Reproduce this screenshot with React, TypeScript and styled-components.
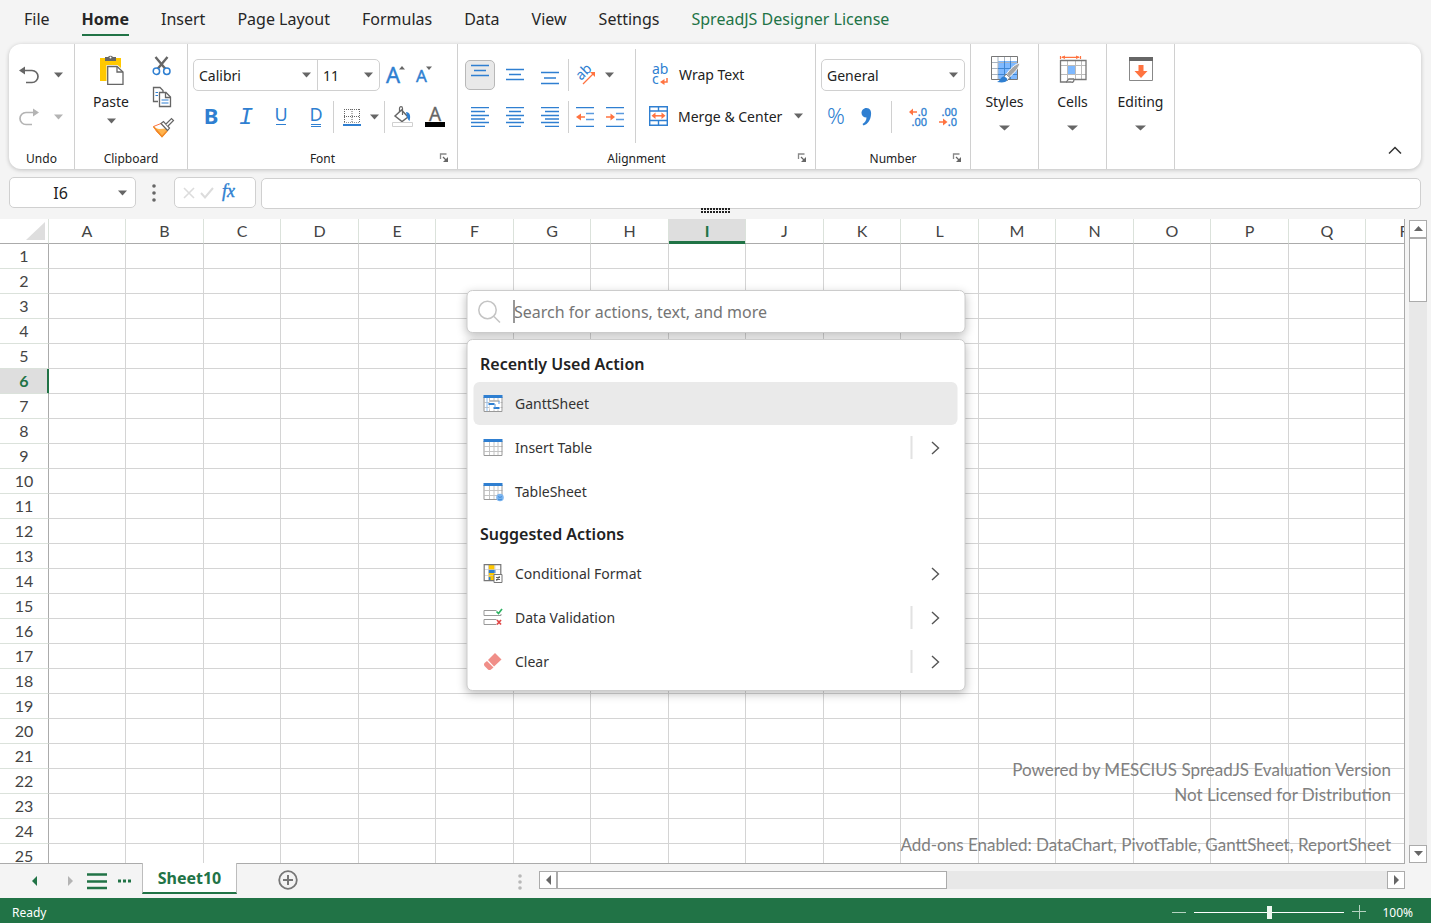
import React from "react";
import styled, { createGlobalStyle, css } from "styled-components";

const green = "#217346";
const blue = "#2f7fd1";
const orange = "#ff7340";
const gray = "#666666";
const line = "#d0d0d0";
const uiFont = '"Noto Sans", "Open Sans", sans-serif';
const sheetFont = 'Lato, "Noto Sans", sans-serif';

const GlobalStyle = createGlobalStyle`
  * { box-sizing: border-box; }
  body { margin: 0; background: #f4f4f4; color: #222; font-family: ${uiFont}; }
  button, input, select { font: inherit; color: inherit; }
  button { background: none; border: 0; padding: 0; margin: 0; cursor: pointer; }
  svg { display: block; flex: none; overflow: visible; }
`;

const Page = styled.div`
  position: relative;
  display: flex;
  flex-direction: column;
  height: 100vh;
  overflow: hidden;
`;

/* ---------- ribbon tabs ---------- */

const Tabs = styled.nav`
  display: flex;
  flex: none;
  gap: 32px;
  height: 44px;
  padding: 0 24px;
`;

const Tab = styled.a<{ $active?: boolean; $accent?: boolean }>`
  height: 36px;
  border-bottom: 2px solid ${(p) => (p.$active ? green : "transparent")};
  color: ${(p) => (p.$accent ? green : "#262626")};
  font-size: 16px;
  font-weight: ${(p) => (p.$active ? 700 : 400)};
  line-height: 38px;
  text-decoration: none;
  white-space: nowrap;
`;

/* ---------- ribbon ---------- */

const Ribbon = styled.div`
  display: flex;
  flex: none;
  height: 125px;
  margin: 0 10px 0 9px;
  background: #fff;
  border-radius: 12px;
  box-shadow: 0 1px 4px rgba(0, 0, 0, 0.22);
`;

const Group = styled.section<{ $width: number }>`
  display: flex;
  flex: none;
  flex-direction: column;
  width: ${(p) => p.$width}px;
  border-right: 1px solid ${line};
`;

const GroupFooter = styled.footer`
  display: grid;
  grid-template-columns: 1fr auto 1fr;
  align-items: center;
  height: 22px;
  margin-top: auto;
  font-size: 12px;

  button { justify-self: end; margin-right: 6px; }
`;

const FooterLabel = styled.span`
  grid-column: 2;
`;

const Rows = styled.div<{ $left: number }>`
  display: flex;
  flex-direction: column;
  gap: 10px;
  padding: 15px 0 0 ${(p) => p.$left}px;
`;

const Row = styled.div<{ $gap?: number }>`
  display: flex;
  align-items: center;
  gap: ${(p) => p.$gap ?? 0}px;
  height: 32px;
`;

const Split = styled.div`
  display: flex;
`;

const IconButton = styled.button<{ $width?: number; $height?: number; $active?: boolean }>`
  display: flex;
  align-items: center;
  justify-content: center;
  width: ${(p) => p.$width ?? 30}px;
  height: ${(p) => p.$height ?? 30}px;
  border-radius: 5px;
  ${(p) =>
    p.$active &&
    css`
      background: #e9e9e9;
      border: 1px solid #b8b8b8;
    `}
`;

const Rule = styled.span<{ $height?: number; $before?: number; $after?: number }>`
  flex: none;
  width: 1px;
  height: ${(p) => p.$height ?? 32}px;
  margin: 0 ${(p) => p.$after ?? 0}px 0 ${(p) => p.$before ?? 0}px;
  background: ${line};
`;

const TallRule = styled(Rule)`
  margin-top: 5px;
`;

const TallButton = styled.button<{ $gap: number }>`
  display: flex;
  flex-direction: column;
  align-items: center;
  width: 54px;
  margin: 11px auto 0;
  font-size: 14px;
  line-height: 20px;

  svg + span { margin-top: 7px; }
  span + svg { margin-top: ${(p) => p.$gap}px; }
`;

const ClipboardBody = styled.div`
  display: flex;
  gap: 13px;
  padding-left: 9px;

  ${TallButton} { margin: 11px 0 0; }
`;

const IconStack = styled.div`
  display: flex;
  flex-direction: column;
  gap: 11px;
  padding-top: 12px;
`;

const Combo = styled.div`
  display: flex;
  align-self: flex-start;
  height: 32px;
  margin-right: 1px;
  border: 1px solid ${line};
  border-radius: 5px;
`;

const Picker = styled.label<{ $width: number; $divided?: boolean }>`
  display: grid;
  align-items: center;
  width: ${(p) => p.$width}px;
  border-left: ${(p) => (p.$divided ? `1px solid ${line}` : "0")};
  font-size: 14px;

  select, svg { grid-area: 1 / 1; }
  select {
    width: 100%;
    height: 30px;
    padding: 0 20px 0 5px;
    border: 0;
    background: none;
    appearance: none;
    outline: none;
  }
  svg { justify-self: end; margin-right: 6px; pointer-events: none; }
`;

const LabeledButton = styled.button`
  display: flex;
  align-items: center;
  gap: 10px;
  height: 32px;
  padding-bottom: 2px;
  font-size: 14px;
  white-space: nowrap;

  span + svg { margin-left: 2px; }
`;

const Collapse = styled(IconButton)`
  align-self: flex-end;
  margin: 0 15px 8px auto;
`;

/* ---------- formula bar ---------- */

const FormulaBar = styled.div`
  display: flex;
  flex: none;
  height: 31px;
  margin: 8px 10px 0 9px;
`;

const Box = styled.div`
  display: flex;
  align-items: center;
  height: 31px;
  border: 1px solid ${line};
  border-radius: 5px;
  background: #fff;
`;

const NameBox = styled(Box)`
  width: 127px;
  font-size: 16px;

  input {
    width: 101px;
    height: 28px;
    border: 0;
    padding: 0;
    background: none;
    outline: none;
    text-align: center;
  }
`;

const Grip = styled.div`
  display: flex;
  align-items: center;
  justify-content: center;
  width: 38px;
  padding-right: 2px;
`;

const FxBox = styled(Box)`
  width: 82px;
  padding-left: 6px;
  margin-right: 5px;
`;

const FormulaInput = styled.input`
  flex: 1;
  min-width: 0;
  height: 31px;
  margin-top: 1px;
  padding: 0 8px;
  border: 1px solid ${line};
  border-radius: 5px;
  background: #fff;
  outline: none;
`;

const Resizer = styled.div`
  display: flex;
  flex: none;
  justify-content: center;
  height: 11px;
`;

/* ---------- sheet ---------- */

const Workspace = styled.main`
  display: flex;
  flex: 1 1 0;
  min-height: 0;
`;

const SheetView = styled.div`
  position: relative;
  flex: 1;
  min-width: 0;
  overflow: hidden;
  background: #fff;
  border-right: 1px solid #ababab;
  border-bottom: 1px solid #ababab;
`;

const Grid = styled.table`
  table-layout: fixed;
  width: 1px;
  border-collapse: separate;
  border-spacing: 0;
  color: #444;
  font-family: ${sheetFont};
  font-size: 16px;
  line-height: 24px;

  th, td {
    height: 25px;
    padding: 0;
    border-right: 1px solid #d4d4d4;
    border-bottom: 1px solid #d4d4d4;
    font-weight: 400;
  }
`;

const ColumnHead = styled.th<{ $selected: boolean }>`
  && {
    border-right-color: #dbe2db;
    border-bottom: 1px solid #ababab;
    ${(p) =>
      p.$selected &&
      css`
        background: #dedede;
        color: ${green};
        font-weight: 700;
        box-shadow: inset 0 -2px ${green};
        border-bottom-color: ${green};
      `}
  }
`;

const RowHead = styled.th<{ $selected: boolean }>`
  && {
    border-right: 1px solid #ababab;
    border-bottom-color: #dbe2db;
    ${(p) =>
      p.$selected &&
      css`
        background: #dedede;
        color: ${green};
        font-weight: 700;
        box-shadow: inset -1px 0 ${green};
        border-right-color: ${green};
      `}
  }
`;

const Corner = styled.td`
  && {
    border-right-color: #dbe2db;
    border-bottom-color: #ababab;
  }
  svg { margin-left: auto; margin-right: 3px; }
`;

const Watermark = styled.p`
  position: absolute;
  right: 13px;
  bottom: 6px;
  margin: 0;
  color: #808080;
  font-family: ${sheetFont};
  font-size: 17px;
  line-height: 25px;
  text-align: right;
  white-space: pre-line;
  pointer-events: none;
`;

const ScrollColumn = styled.div`
  display: flex;
  flex: none;
  flex-direction: column;
  width: 18px;
  margin: 1px 4px 1px;
  background: #e8e8e8;
`;

const ScrollButton = styled.button`
  display: flex;
  flex: none;
  align-items: center;
  justify-content: center;
  width: 18px;
  height: 18px;
  background: #fff;
  border: 1px solid #ababab;
`;

const VerticalThumb = styled.div`
  height: 64px;
  margin-bottom: auto;
  background: #fff;
  border: 1px solid #ababab;
`;

/* ---------- sheet tabs ---------- */

const SheetBar = styled.div`
  display: flex;
  flex: none;
  height: 34px;
`;

const SheetNav = styled.div`
  display: flex;
  align-items: center;
  width: 142px;
  padding-left: 24px;
`;

const NavButton = styled(IconButton)<{ $before?: number }>`
  margin-left: ${(p) => p.$before ?? 0}px;
`;

const SheetTab = styled.button`
  position: relative;
  width: 95px;
  height: 31px;
  margin-top: -1px;
  background: #fff;
  border: 1px solid #bdbdbd;
  border-top: 0;
  border-bottom: 2px solid ${green};
  color: ${green};
  font-size: 16px;
  font-weight: 700;
  line-height: 28px;
`;

const AddSheet = styled(IconButton)`
  margin: 1px 0 0 36px;
`;

const ScrollRow = styled.div`
  display: flex;
  width: calc(61% - 7px);
  height: 18px;
  margin: 7px 26px 0 0;
  background: #e8e8e8;
`;

const SplitterGrip = styled(Grip)`
  width: 36px;
  height: 35px;
  margin-left: auto;
`;

const HorizontalThumb = styled.div`
  width: 45%;
  margin-right: auto;
  background: #fff;
  border: 1px solid #ababab;
`;

/* ---------- status bar ---------- */

const StatusBar = styled.footer`
  display: flex;
  flex: none;
  align-items: center;
  height: 25px;
  padding: 3px 18px 0 12px;
  background: ${green};
  color: #fff;
  font-size: 12px;
`;

const ZoomControls = styled.div`
  display: flex;
  align-items: center;
  gap: 8px;
  margin-left: auto;
`;

const ZoomSlider = styled.input`
  width: 150px;
  height: 14px;
  margin: 0;
  appearance: none;
  background: linear-gradient(#fff, #fff) center / 100% 1px no-repeat;

  &::-webkit-slider-thumb {
    appearance: none;
    width: 5px;
    height: 13px;
    background: #eef8f0;
  }
`;

const ZoomValue = styled.span`
  width: 39px;
  text-align: right;
`;

/* ---------- command search ---------- */

const Palette = styled.div`
  position: absolute;
  top: 290px;
  left: 50%;
  width: 499px;
  transform: translateX(-50%);
`;

const surface = css`
  background: #fff;
  border: 1px solid #ccc;
  border-radius: 6px;
  box-shadow: 0 3px 10px rgba(0, 0, 0, 0.25);
`;

const SearchBox = styled.label`
  ${surface}
  display: flex;
  align-items: center;
  height: 43px;
  margin-bottom: 6px;
  padding: 0 12px 0 10px;

  input {
    flex: 1;
    min-width: 0;
    height: 40px;
    padding: 0;
    border: 0;
    background: none;
    font-size: 16px;
    outline: none;
    caret-color: transparent;
  }
  input::placeholder { color: #757575; opacity: 1; }
`;

const Caret = styled.span`
  width: 1px;
  height: 23px;
  margin-left: 12px;
  background: #333;
`;

const Panel = styled.div`
  ${surface}
  padding: 7px 7px 6px 6px;
`;

const Heading = styled.h2`
  margin: 0;
  padding-left: 7px;
  color: #222;
  font-size: 16px;
  font-weight: 600;
  line-height: 35px;
`;

const List = styled.ul`
  margin: 0;
  padding: 0;
  list-style: none;

  & + ${Heading} { margin-top: 4px; }
`;

const Item = styled.li<{ $active?: boolean }>`
  display: flex;
  align-items: center;
  height: 43px;
  margin-bottom: 1px;
  border-radius: 6px;
  background: ${(p) => (p.$active ? "#eaeaea" : "transparent")};
  color: #333;
  font-size: 14px;
`;

const ItemAction = styled.button`
  display: flex;
  flex: 1;
  align-items: center;
  gap: 12px;
  height: 43px;
  padding-left: 10px;
`;

const ItemMore = styled.button<{ $divided?: boolean }>`
  display: flex;
  align-items: center;
  justify-content: center;
  width: 47px;
  height: 23px;
  padding-left: 2px;
  border-left: 2px solid ${(p) => (p.$divided ? "#e2e2e2" : "transparent")};
`;

/* ---------- icons ---------- */

type SvgProps = { w: number; h: number; children: React.ReactNode };
const Svg = ({ w, h, children }: SvgProps) => (
  <svg width={w} height={h} viewBox={`0 0 ${w} ${h}`} fill="none" aria-hidden="true">
    {children}
  </svg>
);

const Down = ({ w = 9, color = gray }: { w?: number; color?: string }) => (
  <Svg w={w} h={6}>
    <path d={`M0 0.500H${w}L${w / 2} 5.500Z`} fill={color} />
  </Svg>
);

const UndoIcon = () => (
  <Svg w={20} h={20}>
    <path d="M0 5.500 6 1.500v8Z" fill={gray} />
    <path d="M5 5.500h8a6 6 0 0 1 0 12H7" stroke={gray} strokeWidth="1.700" />
  </Svg>
);

const RedoIcon = () => (
  <Svg w={20} h={20}>
    <path d="M20 5.500 14 1.500v8Z" fill="#b4b4b4" />
    <path d="M15 5.500H7a6 6 0 0 0 0 12h6" stroke="#b4b4b4" strokeWidth="1.700" />
  </Svg>
);

const PasteIcon = () => (
  <Svg w={26} h={30}>
    <path d="M2 3h21v23H2Z" fill="#ffc800" />
    <path d="M7 2h3a3 3 0 0 1 5 0h3v4H7Z" fill={gray} />
    <circle cx="12.500" cy="2.500" r="1" fill="#fff" />
    <path d="M8.500 10h11L27 16.500V30H8.500Z" fill="#fff" />
    <path d="M9.700 11.500H19l6 5.500v12.300H9.700Z" stroke={gray} strokeWidth="1.300" fill="#fff" />
    <path d="M19 11.500V17h6" stroke={gray} strokeWidth="1.300" />
  </Svg>
);

const CutIcon = () => (
  <Svg w={20} h={20}>
    <path d="M3.500 1 13.500 13M15.500 1 5.500 13" stroke={gray} strokeWidth="2.400" />
    <circle cx="4.400" cy="15.300" r="3.200" stroke={blue} strokeWidth="1.500" />
    <circle cx="14.800" cy="15.300" r="3.200" stroke={blue} strokeWidth="1.500" />
  </Svg>
);

const CopyIcon = () => (
  <Svg w={20} h={20}>
    <path d="M6 14.500H1.500V.5H8l3 3V5" stroke={gray} strokeWidth="1.300" />
    <path d="M3.500 5.500H6M3.500 8.500H6" stroke={blue} strokeWidth="1.200" />
    <path d="M7.500 5.500h6.500l4.500 4.500v9.500h-11Z" stroke={gray} strokeWidth="1.300" fill="#fff" />
    <path d="M13.500 5.500v5h5" stroke={gray} strokeWidth="1.300" />
    <path d="M9.500 13h7M9.500 16h7" stroke={blue} strokeWidth="1.200" />
  </Svg>
);

const BrushIcon = () => (
  <Svg w={20} h={20}>
    <path d="M1.500 8.500 9 5.500l6.500 7L10 19 5 14Z" fill="#fff" stroke={orange} strokeWidth="1" />
    <path d="m3 10 4 1 7-.5 1 2L10 18.500 5 14Z" fill="#ffb34d" />
    <path d="m1.500 8.500 8.500 10 5-5.500" stroke="#f08c28" strokeWidth="1.500" />
    <path d="m9 5.500 2.500-2 6 6.500-2 2.500Z" fill="#fff" stroke={gray} strokeWidth="1.200" />
    <path d="m14 6 5.500-5.500 2 2L16 8" fill="#fff" stroke={gray} strokeWidth="1.200" />
  </Svg>
);

const Glyph = ({
  text,
  size = 22,
  weight = 400,
  italic,
  lines = 0,
}: {
  text: string;
  size?: number;
  weight?: number;
  italic?: boolean;
  lines?: number;
}) => (
  <Svg w={20} h={22}>
    <text
      x="10"
      y={lines ? 15 : 18}
      textAnchor="middle"
      fill={blue}
      fontSize={size}
      fontWeight={weight}
      fontStyle={italic ? "italic" : "normal"}
      fontFamily={italic ? "Liberation Mono, monospace" : "Noto Sans, sans-serif"}
    >
      {text}
    </text>
    {lines > 0 && <path d="M5 18.500h10" stroke={blue} />}
    {lines > 1 && <path d="M5 20.500h10" stroke={blue} />}
  </Svg>
);

const FontSizeIcon = ({ grow }: { grow?: boolean }) => (
  <Svg w={20} h={24}>
    <text x="0" y={grow ? 20 : 19} fill={blue} stroke={blue} strokeWidth="0.400" fontSize={grow ? 22 : 17} fontFamily="Noto Sans, sans-serif">
      A
    </text>
    <path d={grow ? "M13 6.500h6l-3-3.500Z" : "M10 3.500h6l-3 3.500Z"} fill={gray} />
  </Svg>
);

const BorderIcon = () => (
  <Svg w={18} h={18}>
    <path d="M1 1.500h16M1 8.500h16M1.500 1v14M9 1v14M16.500 1v14" stroke={gray} strokeDasharray="1 1" />
    <path d="M1 14.500h16" stroke="#999" strokeDasharray="1 1" />
    <path d="M0 17h18" stroke={blue} strokeWidth="2" />
  </Svg>
);

const FillIcon = () => (
  <Svg w={22} h={22}>
    <path d="m3 10 6.500-6 6.500 7-6 4.500Z" stroke={gray} strokeWidth="1.500" fill="#fff" />
    <path d="M7.500 6V2.500c0-2.500 3-2.500 3 0V9" stroke={gray} strokeWidth="1.200" />
    <path d="M14 6c4 0 5 4 3.500 9-2-1.500-2.500-4-3-7Z" fill={blue} />
    <path d="M.5 16.500h20v4H.5Z" fill="#fff" stroke={line} />
  </Svg>
);

const FontColorIcon = () => (
  <Svg w={22} h={22}>
    <text x="11" y="15" textAnchor="middle" fill={gray} stroke={gray} strokeWidth="0.300" fontSize="19" fontFamily="Noto Sans, sans-serif">
      A
    </text>
    <path d="M1 16h20v5H1Z" fill="#000" />
  </Svg>
);

const LinesIcon = ({ d, h = 20 }: { d: string; h?: number }) => (
  <Svg w={20} h={h}>
    <path d={d} stroke={blue} strokeWidth="1.300" />
  </Svg>
);

const IndentIcon = ({ increase }: { increase?: boolean }) => (
  <Svg w={20} h={20}>
    <path d="M0 .7h18M0 19.300h18" stroke={blue} strokeWidth="1.300" />
    <path d="M10 6.500h8M10 12.500h8" stroke="#5c9bdf" strokeWidth="1.500" />
    <path d={increase ? "M0 10h6" : "M4 10h5"} stroke={orange} strokeWidth="1.500" />
    <path d={increase ? "M4.500 6.500v7L9 10Z" : "M5 6.500v7L0 10Z"} fill={orange} />
  </Svg>
);

const OrientationIcon = () => (
  <Svg w={20} h={20}>
    <text x="0" y="0" transform="translate(5 16) rotate(-45)" fill={blue} fontSize="14" fontFamily="Noto Sans, sans-serif">
      ab
    </text>
    <path d="M7 19 18 8" stroke={orange} strokeWidth="1.300" />
    <path d="M19 7v5l-5-5Z" fill={orange} />
  </Svg>
);

const WrapIcon = () => (
  <Svg w={20} h={22}>
    <text x="3" y="11" fill={blue} fontSize="14" fontFamily="Noto Sans, sans-serif">
      ab
    </text>
    <text x="3" y="21" fill={blue} fontSize="14" fontFamily="Noto Sans, sans-serif">
      c
    </text>
    <path d="M18 15v4h-4" stroke={orange} strokeWidth="1.500" />
    <path d="M15.500 16v6L11 19Z" fill={orange} />
  </Svg>
);

const MergeIcon = () => (
  <Svg w={19} h={20}>
    <path d="M.7.7h17.600v18.600H.7ZM.7 5h17.600M.7 14.500h17.600M9.500 0v5M9.500 14.500v5" stroke={blue} strokeWidth="1.400" />
    <path d="M4 9.800h11" stroke={orange} strokeWidth="1.500" />
    <path d="M6.500 6.500v6.600L2.500 9.800ZM12.500 6.500v6.600l4-3.300Z" fill={orange} />
  </Svg>
);

const CommaIcon = () => (
  <Svg w={12} h={20}>
    <path d="M6.500 1C10 1 11.500 4 11 8c-.5 5-3 9-7.500 10.500L2.500 17C5 15.500 6.500 13.500 6.500 10.500 3.500 10.500 1.500 8.500 1.500 6S3.500 1 6.500 1Z" fill={blue} />
  </Svg>
);

const DecimalIcon = ({ increase }: { increase?: boolean }) => (
  <Svg w={20} h={22}>
    <g fill={blue} stroke={blue} strokeWidth="0.300" fontSize="11" fontFamily="Noto Sans, sans-serif">
      <text x="19" y="10" textAnchor="end">{increase ? ".0" : ".00"}</text>
      <text x="19" y="20" textAnchor="end">{increase ? ".00" : ".0"}</text>
    </g>
    <path d={increase ? "M3 6h6" : "M1 16h6"} stroke={orange} strokeWidth="1.500" />
    <path d={increase ? "M5 2.500v7L1 6Z" : "M5 12.500v7L9.500 16Z"} fill={orange} />
  </Svg>
);

const StylesIcon = () => (
  <Svg w={30} h={30}>
    <path d="M8 6h19v18H8Z" fill="#7fb9ff" />
    <path d="M2 7.500h25M2 13.500h25M2 19.500h25M8 2v22M14.500 2v22M20.500 2v22" stroke="#a9b4c0" />
    <path d="M8 13.500h19M14.500 6v18M20.500 6v18M8 19.500h19" stroke="#3f86d2" />
    <path d="M1.500 1.500h26v23h-26Z" stroke="#777" />
    <path d="M30 8c-5 1-10 6-13.500 11l3 3C24 18 29 13 30 8Z" fill="#a5a5a5" stroke="#fff" />
    <path d="m16 19 4 3.500-2.500 3-4-3Z" fill="#fff" stroke="#777" />
    <path d="M13 21.500c3 .5 5 2 4 4-2 2.500-6 2-10 1.500 3-1 3-4 6-5.500Z" fill={blue} />
  </Svg>
);

const CellsIcon = () => (
  <Svg w={28} h={30}>
    <path d="M1.500 1v3M21.500 1v3M3 2.300h17" stroke={orange} strokeWidth="1.200" />
    <path d="m6 .5-4 1.800L6 4ZM17 .5l4 1.800L17 4Z" fill={orange} />
    <path d="M9 11h7v8H9Z" fill="#7fb9ff" />
    <path d="M2 10.500h25M2 19.500h25M8.500 6v18M16.500 6v18M22.500 6v18" stroke="#bbb" />
    <path d="M1.500 27V5.500h25.500v19H15c0 3-2 3-3 2.500H1.500Z" stroke="#777" strokeWidth="1.300" />
    <path d="M7 27c2 0 1-3 3-3h5" stroke="#777" strokeWidth="1.300" fill="#fff" />
  </Svg>
);

const EditingIcon = () => (
  <Svg w={26} h={30}>
    <path d="M1.500 2.500h23v23h-23Z" fill="#fff" stroke="#888" />
    <path d="M1 2h24v4H1Z" fill={gray} />
    <path d="M10.500 10h5v6h4L13 23l-6.500-7h4Z" fill={orange} />
  </Svg>
);

const LauncherIcon = () => (
  <Svg w={10} h={10}>
    <path d="M1.500 6V1h6" stroke="#888" strokeWidth="1.300" />
    <path d="m4 4 3 3" stroke={gray} strokeWidth="1.200" />
    <path d="M9 4v5H4Z" fill={gray} />
  </Svg>
);

const ArrowIcon = ({ to, color = gray }: { to: "up" | "down" | "left" | "right"; color?: string }) => {
  const shape = {
    up: "M0 7h9L4.500 2Z",
    down: "M0 2h9L4.500 7Z",
    left: "M7 0v10L2 5Z",
    right: "M2 0v10l5-5Z",
  }[to];
  return (
    <Svg w={9} h={10}>
      <path d={shape} fill={color} />
    </Svg>
  );
};

const DotsIcon = ({ color, step }: { color: string; step: number }) => (
  <Svg w={4} h={20}>
    {[-1, 0, 1].map((n) => (
      <circle key={n} cx="2" cy={10 + n * step} r="1.800" fill={color} />
    ))}
  </Svg>
);

const ChevronRight = () => (
  <Svg w={10} h={14}>
    <path d="m1.500 1 6.500 6-6.500 6" stroke="#555" strokeWidth="1.400" />
  </Svg>
);

const TableBase = () => (
  <>
    <path d="M6 4v14M10.500 4v14M14.500 4v14M1 8.500h18M1 13.500h18" stroke="#c4c4c4" />
    <path d="M.5 3v14.500h18V3" stroke="#999" />
    <path d="M0 1h19v3H0Z" fill={blue} />
  </>
);

const TableIcon = () => (
  <Svg w={20} h={20}>
    <TableBase />
  </Svg>
);

const GanttIcon = () => (
  <Svg w={20} h={20}>
    <path d="M1 4h18v13H1Z" fill="#fff" />
    <TableBase />
    <path d="M3.500 4v13" stroke="#8dbdf0" />
    <path d="M6 6.500h11v9H6Z" fill="#fff" />
    <path d="M6 7h10" stroke="#999" strokeWidth="1.200" />
    <path d="M5 10h6M10 14h6" stroke={blue} strokeWidth="1.800" />
    <path d="M11.500 10v4M15.500 7v3" stroke="#5c9bdf" />
  </Svg>
);

const TableSheetIcon = () => (
  <Svg w={20} h={20}>
    <TableBase />
    <circle cx="16.500" cy="15.500" r="3.800" fill="#7db5ef" />
    <path d="M14.500 14.500c1 1 3 1 4 0M14.500 17c1 1 3 1 4 0" stroke={blue} strokeWidth="0.800" />
  </Svg>
);

const ConditionalIcon = () => (
  <Svg w={20} h={20}>
    <path d="M5 1h6v16H5Z" fill="#ffc800" />
    <path d="M5 6h7v3H5ZM5 13h2v4H5Z" fill={blue} />
    <path d="M1 5.500h16M1 11.500h16M5 1v16M11.500 1v16" stroke="#c8c8c8" strokeWidth="0.700" />
    <path d="M.7.700h16.600v16H.7Z" stroke="#777" strokeWidth="1.200" />
    <path d="M10.500 10.500h8v8h-8Z" fill="#fff" stroke="#777" />
    <path d="M12.500 13.500h4M12.500 15.500h4M16 12l-3 5" stroke="#555" strokeWidth="0.900" />
  </Svg>
);

const ValidationIcon = () => (
  <Svg w={20} h={20}>
    <path d="M13 2.500H.5v5h17V6M13 11.500H.5v5H13" stroke="#999" />
    <path d="m13 3.500 2 2 3.500-4.500" stroke="#2eb262" strokeWidth="1.700" />
    <path d="m13.500 12 4 4.500m0-4.500-4 4.500" stroke="#e04848" strokeWidth="1.700" />
  </Svg>
);

const EraserIcon = () => (
  <Svg w={20} h={20}>
    <path d="m11.500 1 6.500 6.500-7.500 7L4.500 8Z" fill="#f08e88" />
    <path d="m3.500 9 6.500 6.500-2.500 2c-1 .7-2 .7-3 0L1 14c-.7-1-.7-2 0-3Z" fill="#f08e88" />
  </Svg>
);

/* ---------- data ---------- */

const tabs = ["File", "Home", "Insert", "Page Layout", "Formulas", "Data", "View", "Settings"];
const columns = Array.from({ length: 34 }, (_, i) =>
  i < 26 ? String.fromCharCode(65 + i) : "A" + String.fromCharCode(39 + i)
);
const rows = Array.from({ length: 60 }, (_, i) => i + 1);

const alignments = [
  { name: "Align left", d: "M1 .7h18M1 4.500h14M1 8.500h18M1 12h14M1 15.500h18M1 19.300h14" },
  { name: "Center", d: "M1 .7h18M4 4.500h12M1 8.500h18M4 12h12M1 15.500h18M4 19.300h12" },
  { name: "Align right", d: "M1 .7h18M5 4.500h14M1 8.500h18M5 12h14M1 15.500h18M5 19.300h14" },
];

type Entry = { name: string; icon: React.ReactNode; active?: boolean; more?: boolean; divided?: boolean };

const recent: Entry[] = [
  { name: "GanttSheet", icon: <GanttIcon />, active: true },
  { name: "Insert Table", icon: <TableIcon />, more: true, divided: true },
  { name: "TableSheet", icon: <TableSheetIcon /> },
];

const suggested: Entry[] = [
  { name: "Conditional Format", icon: <ConditionalIcon />, more: true },
  { name: "Data Validation", icon: <ValidationIcon />, more: true, divided: true },
  { name: "Clear", icon: <EraserIcon />, more: true, divided: true },
];

const Entries = ({ items }: { items: Entry[] }) => (
  <List>
    {items.map((item) => (
      <Item key={item.name} $active={item.active}>
        <ItemAction>
          {item.icon}
          <span>{item.name}</span>
        </ItemAction>
        {item.more && (
          <ItemMore $divided={item.divided} aria-label={`${item.name} options`}>
            <ChevronRight />
          </ItemMore>
        )}
      </Item>
    ))}
  </List>
);

const Footer = ({ label, launcher }: { label: string; launcher?: boolean }) => (
  <GroupFooter>
    <FooterLabel>{label}</FooterLabel>
    {launcher && (
      <IconButton $width={14} $height={14} aria-label={`${label} settings`}>
        <LauncherIcon />
      </IconButton>
    )}
  </GroupFooter>
);

const CollapsedGroup = ({ label, icon }: { label: string; icon: React.ReactNode }) => (
  <Group $width={68}>
    <TallButton $gap={13}>
      {icon}
      <span>{label}</span>
      <Down w={11} />
    </TallButton>
  </Group>
);

export default function App() {
  return (
    <Page>
      <GlobalStyle />
      <Tabs>
        {tabs.map((tab) => (
          <Tab key={tab} href="#" $active={tab === "Home"}>
            {tab}
          </Tab>
        ))}
        <Tab href="#" $accent>
          SpreadJS Designer License
        </Tab>
      </Tabs>

      <Ribbon>
        <Group $width={66}>
          <Rows $left={10}>
            <Row $gap={14}>
              <IconButton $width={20} aria-label="Undo"><UndoIcon /></IconButton>
              <IconButton $width={10} aria-label="Undo history"><Down /></IconButton>
            </Row>
            <Row $gap={14}>
              <IconButton $width={20} aria-label="Redo"><RedoIcon /></IconButton>
              <IconButton $width={10} aria-label="Redo history"><Down color="#b4b4b4" /></IconButton>
            </Row>
          </Rows>
          <Footer label="Undo" />
        </Group>

        <Group $width={113}>
          <ClipboardBody>
            <TallButton $gap={6}>
              <PasteIcon />
              <span>Paste</span>
              <Down />
            </TallButton>
            <IconStack>
              <IconButton $width={22} $height={20} aria-label="Cut"><CutIcon /></IconButton>
              <IconButton $width={22} $height={20} aria-label="Copy"><CopyIcon /></IconButton>
              <IconButton $width={22} $height={20} aria-label="Format painter"><BrushIcon /></IconButton>
            </IconStack>
          </ClipboardBody>
          <Footer label="Clipboard" />
        </Group>

        <Group $width={270}>
          <Rows $left={5}>
            <Row>
              <Combo>
                <Picker $width={123}>
                  <select aria-label="Font family"><option>Calibri</option></select>
                  <Down />
                </Picker>
                <Picker $width={62} $divided>
                  <select aria-label="Font size"><option>11</option></select>
                  <Down />
                </Picker>
              </Combo>
              <IconButton aria-label="Increase font size"><FontSizeIcon grow /></IconButton>
              <IconButton aria-label="Decrease font size"><FontSizeIcon /></IconButton>
            </Row>
            <Row>
              <IconButton $width={35} aria-label="Bold"><Glyph text="B" weight={700} /></IconButton>
              <IconButton $width={35} aria-label="Italic"><Glyph text="I" size={24} italic /></IconButton>
              <IconButton $width={35} aria-label="Underline"><Glyph text="U" size={18} lines={1} /></IconButton>
              <IconButton $width={35} aria-label="Double underline"><Glyph text="D" size={18} lines={2} /></IconButton>
              <Rule $after={3} />
              <IconButton aria-label="Borders"><BorderIcon /></IconButton>
              <IconButton $width={14} aria-label="Border options"><Down /></IconButton>
              <Rule $before={3} $after={2} />
              <IconButton $width={32} aria-label="Fill color"><FillIcon /></IconButton>
              <IconButton $width={32} aria-label="Font color"><FontColorIcon /></IconButton>
            </Row>
          </Rows>
          <Footer label="Font" launcher />
        </Group>

        <Group $width={358}>
          <Split>
            <Rows $left={7}>
              <Row>
                <Row $gap={5}>
                  <IconButton $active aria-label="Top align"><LinesIcon d="M1 .5h18M4 5.500h12M1 10.500h18" /></IconButton>
                  <IconButton aria-label="Middle align"><LinesIcon d="M1 4.500h18M4 9.500h12M1 14.500h18" /></IconButton>
                  <IconButton aria-label="Bottom align"><LinesIcon d="M1 7.500h18M4 13h12M1 18.500h18" /></IconButton>
                </Row>
                <Rule $before={3} $after={2} />
                <IconButton aria-label="Orientation"><OrientationIcon /></IconButton>
                <IconButton $width={16} aria-label="Orientation options"><Down /></IconButton>
              </Row>
              <Row>
                <Row $gap={5}>
                  {alignments.map((a) => (
                    <IconButton key={a.name} aria-label={a.name}><LinesIcon d={a.d} /></IconButton>
                  ))}
                </Row>
                <Rule $before={3} $after={2} />
                <IconButton aria-label="Decrease indent"><IndentIcon /></IconButton>
                <IconButton aria-label="Increase indent"><IndentIcon increase /></IconButton>
              </Row>
            </Rows>
            <TallRule $height={94} $before={4} />
            <Rows $left={13}>
              <LabeledButton>
                <WrapIcon />
                <span>Wrap Text</span>
              </LabeledButton>
              <LabeledButton>
                <MergeIcon />
                <span>Merge &amp; Center</span>
                <Down />
              </LabeledButton>
            </Rows>
          </Split>
          <Footer label="Alignment" launcher />
        </Group>

        <Group $width={155}>
          <Rows $left={5}>
            <Combo>
              <Picker $width={142}>
                <select aria-label="Number format"><option>General</option></select>
                <Down />
              </Picker>
            </Combo>
            <Row>
              <IconButton aria-label="Percent"><Glyph text="%" weight={300} /></IconButton>
              <IconButton aria-label="Comma style"><CommaIcon /></IconButton>
              <Rule $before={10} $after={11} />
              <IconButton aria-label="Increase decimal"><DecimalIcon increase /></IconButton>
              <IconButton aria-label="Decrease decimal"><DecimalIcon /></IconButton>
            </Row>
          </Rows>
          <Footer label="Number" launcher />
        </Group>

        <CollapsedGroup label="Styles" icon={<StylesIcon />} />
        <CollapsedGroup label="Cells" icon={<CellsIcon />} />
        <CollapsedGroup label="Editing" icon={<EditingIcon />} />

        <Collapse $width={22} $height={22} aria-label="Collapse ribbon">
          <Svg w={14} h={8}>
            <path d="m1 7.500 6-6 6 6" stroke="#333" strokeWidth="1.500" />
          </Svg>
        </Collapse>
      </Ribbon>

      <FormulaBar>
        <NameBox>
          <input aria-label="Name box" defaultValue="I6" />
          <IconButton $width={23} aria-label="Named ranges"><Down /></IconButton>
        </NameBox>
        <Grip><DotsIcon color={gray} step={7} /></Grip>
        <FxBox>
          <IconButton $width={15} aria-label="Cancel">
            <Svg w={12} h={12}><path d="m1 1 10 10M11 1 1 11" stroke="#dcdcdc" strokeWidth="1.600" /></Svg>
          </IconButton>
          <IconButton $width={22} aria-label="Enter">
            <Svg w={14} h={12}><path d="m1 6 4 4.500L13 1" stroke="#dcdcdc" strokeWidth="2" /></Svg>
          </IconButton>
          <IconButton $width={22} aria-label="Insert function">
            <Svg w={18} h={20}>
              <text x="2" y="14" fill={blue} stroke={blue} strokeWidth="0.400" fontSize="18" fontStyle="italic" fontFamily="Liberation Serif, serif">fx</text>
            </Svg>
          </IconButton>
        </FxBox>
        <FormulaInput aria-label="Formula" />
      </FormulaBar>
      <Resizer>
        <Svg w={30} h={5}>
          <path d="M0 1h30M0 4h30" stroke="#222" strokeWidth="2" strokeDasharray="2 1" />
        </Svg>
      </Resizer>

      <Workspace>
        <SheetView>
          <Grid>
            <colgroup>
              <col width={49} />
              {columns.map((c, i) => (
                <col key={c} width={i % 2 ? 78 : 77} />
              ))}
            </colgroup>
            <thead>
              <tr>
                <Corner>
                  <Svg w={19} h={19}><path d="M19 0v18H0Z" fill="#dedede" /></Svg>
                </Corner>
                {columns.map((c) => (
                  <ColumnHead key={c} scope="col" $selected={c === "I"}>{c}</ColumnHead>
                ))}
              </tr>
            </thead>
            <tbody>
              {rows.map((r) => (
                <tr key={r}>
                  <RowHead scope="row" $selected={r === 6}>{r}</RowHead>
                  {columns.map((c) => <td key={c} />)}
                </tr>
              ))}
            </tbody>
          </Grid>
          <Watermark>
            {"Powered by MESCIUS SpreadJS Evaluation Version\nNot Licensed for Distribution\n\nAdd-ons Enabled: DataChart, PivotTable, GanttSheet, ReportSheet"}
          </Watermark>
        </SheetView>
        <ScrollColumn>
          <ScrollButton aria-label="Scroll up"><ArrowIcon to="up" /></ScrollButton>
          <VerticalThumb />
          <ScrollButton aria-label="Scroll down"><ArrowIcon to="down" /></ScrollButton>
        </ScrollColumn>
      </Workspace>

      <SheetBar>
        <SheetNav>
          <NavButton $width={20} aria-label="Previous sheet"><ArrowIcon to="left" color={green} /></NavButton>
          <NavButton $width={20} $before={16} aria-label="Next sheet"><ArrowIcon to="right" color="#b4b4b4" /></NavButton>
          <NavButton $width={20} $before={7} aria-label="All sheets">
            <Svg w={20} h={18}><path d="M0 2.500h20M0 9.500h20M0 16h20" stroke={green} strokeWidth="2.500" /></Svg>
          </NavButton>
          <NavButton $width={14} $before={11} aria-label="More sheets">
            <Svg w={14} h={4}><path d="M0 2h3M5 2h3M10 2h3" stroke={green} strokeWidth="3" /></Svg>
          </NavButton>
        </SheetNav>
        <SheetTab>Sheet10</SheetTab>
        <AddSheet aria-label="Add sheet">
          <Svg w={20} h={20}>
            <circle cx="10" cy="10" r="8.800" stroke="#777" strokeWidth="1.800" />
            <path d="M10 5v10M5 10h10" stroke="#777" strokeWidth="2" />
          </Svg>
        </AddSheet>
        <SplitterGrip><DotsIcon color="#b8b8b8" step={6} /></SplitterGrip>
        <ScrollRow>
          <ScrollButton aria-label="Scroll left"><ArrowIcon to="left" /></ScrollButton>
          <HorizontalThumb />
          <ScrollButton aria-label="Scroll right"><ArrowIcon to="right" /></ScrollButton>
        </ScrollRow>
      </SheetBar>

      <StatusBar>
        <span>Ready</span>
        <ZoomControls>
          <IconButton $width={14} $height={14} aria-label="Zoom out">
            <Svg w={14} h={14}><path d="M0 7.500h14" stroke="#b5d3c1" /></Svg>
          </IconButton>
          <ZoomSlider type="range" aria-label="Zoom" min={0} max={100} defaultValue={50} />
          <IconButton $width={14} $height={14} aria-label="Zoom in">
            <Svg w={14} h={14}><path d="M0 6.500h14M7.500 0v14" stroke="#b5d3c1" /></Svg>
          </IconButton>
          <ZoomValue>100%</ZoomValue>
        </ZoomControls>
      </StatusBar>

      <Palette role="dialog" aria-label="Search actions">
        <SearchBox>
          <Svg w={24} h={24}>
            <circle cx="10" cy="10" r="8.700" stroke="#c4c4c4" strokeWidth="1.500" />
            <path d="m16.500 16.500 6 6" stroke="#c4c4c4" strokeWidth="1.500" />
          </Svg>
          <Caret />
          <input aria-label="Search" placeholder="Search for actions, text, and more" />
        </SearchBox>
        <Panel>
          <Heading>Recently Used Action</Heading>
          <Entries items={recent} />
          <Heading>Suggested Actions</Heading>
          <Entries items={suggested} />
        </Panel>
      </Palette>
    </Page>
  );
}
